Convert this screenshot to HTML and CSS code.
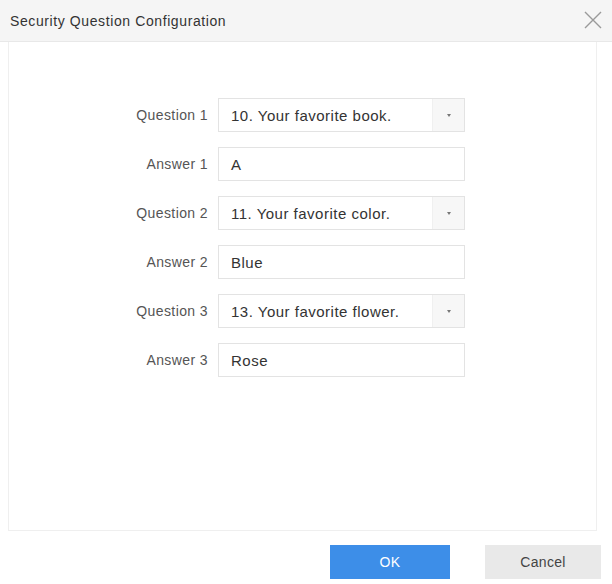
FILE: index.html
```html
<!DOCTYPE html>
<html lang="en">
<head>
<meta charset="UTF-8" />
<title>Security Question Configuration</title>
<link rel="stylesheet" href="styles.css">
</head>
<body>

<div class="dialog">
  <div class="dialog-header">
    <span class="title">Security Question Configuration</span>
    <svg class="close" width="18" height="18" viewBox="0 0 18 18">
      <path d="M1 1 L17 17 M17 1 L1 17" stroke="#9a9a9a" stroke-width="1.4" fill="none"/>
    </svg>
  </div>

  <div class="dialog-body">
    <div class="form">
      <label>Question 1</label>
      <div class="select"><span>10. Your favorite book.</span><i class="caret"></i></div>

      <label>Answer 1</label>
      <div class="input">A</div>

      <label>Question 2</label>
      <div class="select"><span>11. Your favorite color.</span><i class="caret"></i></div>

      <label>Answer 2</label>
      <div class="input">Blue</div>

      <label>Question 3</label>
      <div class="select"><span>13. Your favorite flower.</span><i class="caret"></i></div>

      <label>Answer 3</label>
      <div class="input">Rose</div>
    </div>
  </div>

  <div class="dialog-footer">
    <button class="btn ok">OK</button>
    <button class="btn cancel">Cancel</button>
  </div>
</div>

</body>
</html>
```

FILE: styles.css
```css
* {
  margin: 0;
  padding: 0;
  box-sizing: border-box;
  font-family: "Liberation Sans", Arial, sans-serif;
}

body {
  background: #fff;
  width: 612px;
  height: 584px;
  overflow: hidden;
}

.dialog {
  width: 612px;
  height: 584px;
  display: flex;
  flex-direction: column;
}

.dialog-header {
  height: 42px;
  background: #f5f5f5;
  border-bottom: 1px solid #e8e8e8;
  display: flex;
  align-items: center;
  justify-content: space-between;
  padding: 0 10px 0 10px;
}

.title {
  font-size: 14px;
  letter-spacing: 0.6px;
  color: #333;
}

.close {
  margin-top: -2px;
}

.dialog-body {
  height: 489px;
  margin: 0 15px 0 8px;
  border: 1px solid #efefef;
  border-top: none;
  padding-top: 56px;
}

.form {
  display: grid;
  grid-template-columns: 199px 247px;
  column-gap: 10px;
  row-gap: 15px;
  align-items: center;
}

.form label {
  text-align: right;
  font-size: 14px;
  letter-spacing: 0.4px;
  color: #555;
}

.select,
.input {
  height: 34px;
  border: 1px solid #e3e3e3;
  background: #fff;
  font-size: 15px;
  letter-spacing: 0.5px;
  color: #333;
  display: flex;
  align-items: center;
}

.select span,
.input {
  padding-left: 12px;
}

.select span {
  flex: 1;
}

.caret {
  width: 32px;
  height: 100%;
  background: #f7f7f7;
  border-left: 1px solid #f0f0f0;
  position: relative;
}

.caret::after {
  content: "";
  position: absolute;
  left: 14px;
  top: 15px;
  border-left: 2.5px solid transparent;
  border-right: 2.5px solid transparent;
  border-top: 3px solid #777;
}

.dialog-footer {
  flex: 1;
  display: flex;
  justify-content: flex-end;
  align-items: flex-start;
  gap: 35px;
  padding: 14px 11px 0 0;
}

.btn {
  height: 34px;
  border: none;
  font-size: 14px;
  letter-spacing: 0.3px;
  cursor: pointer;
}

.ok {
  width: 120px;
  background: #3d8ee8;
  color: #fff;
}

.cancel {
  width: 116px;
  background: #e9e9e9;
  color: #444;
}
```
